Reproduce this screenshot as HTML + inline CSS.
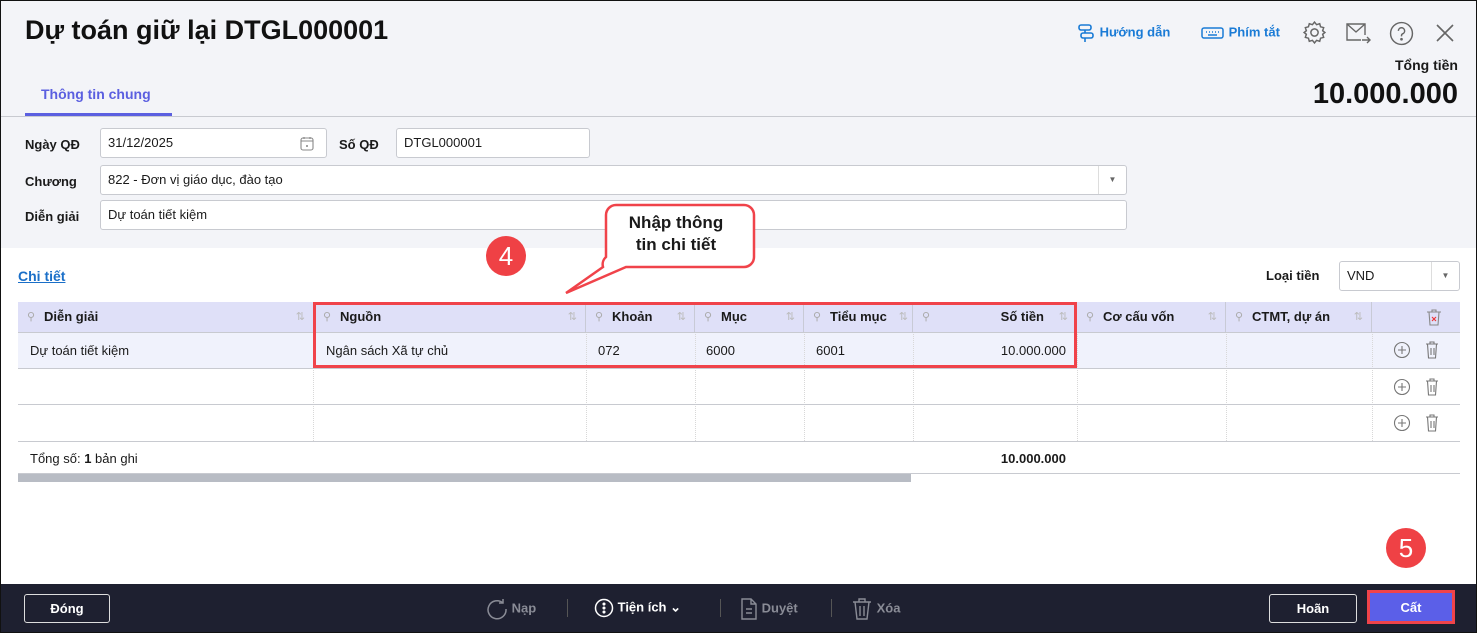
<!DOCTYPE html>
<html><head><meta charset="utf-8"><style>
*{box-sizing:border-box;margin:0;padding:0}
body{width:1477px;height:633px;overflow:hidden;font-family:"Liberation Sans",sans-serif;color:#1a1a1a;position:relative;background:#fff}
.frame{position:absolute;inset:0;border:1px solid #111;pointer-events:none;z-index:50}
.top{position:absolute;left:0;top:0;width:1477px;height:248px;background:#f3f4f8}
.abs{position:absolute}
.lbl{position:absolute;font-size:13px;font-weight:bold}
.inp{position:absolute;background:#fff;border:1px solid #c8cad0;border-radius:3px;font-size:13px;padding-left:7px;line-height:28px}
.th{position:absolute;top:302px;height:30px;font-size:13px;font-weight:bold;line-height:30px;border-right:1px solid #c8cad6}
.pin{color:#aaa;font-weight:normal;font-size:11px;position:absolute;left:9px}
.sort{color:#bbb;font-weight:normal;font-size:11px;position:absolute;right:8px}
.cell{position:absolute;font-size:13px}
.vl{position:absolute;top:332px;height:109px;border-left:1px dotted #d8d8d8}
.hl{position:absolute;left:18px;width:1442px;border-top:1px solid #c8cad0}
.foot{position:absolute;left:0;top:584px;width:1477px;height:49px;background:#1e2030}
.btn{position:absolute;border:1px solid #ddd;border-radius:3px;color:#fff;font-size:13px;font-weight:bold;text-align:center;line-height:27px}
.fi{position:absolute;top:598px;font-size:13px;font-weight:bold;color:#8a8c96}
</style></head><body>
<div class="top"></div>
<div class="abs" style="left:25px;top:15px;font-size:27px;font-weight:bold;color:#111">Dự toán giữ lại DTGL000001</div>
<div class="abs" style="left:1076px;top:23px;color:#1a7bd6;font-size:13px;font-weight:bold">
<svg width="20" height="20" viewBox="0 0 20 20" style="vertical-align:middle" fill="none" stroke="#1a7bd6" stroke-width="1.6"><rect x="3" y="2" width="12" height="5" rx="2"/><rect x="5" y="10" width="12" height="5" rx="2"/><path d="M9 7v3M9 15v4"/></svg> Hướng dẫn</div>
<div class="abs" style="left:1201px;top:23px;color:#1a7bd6;font-size:13px;font-weight:bold">
<svg width="24" height="20" viewBox="0 0 24 20" style="vertical-align:middle" fill="none" stroke="#1a7bd6" stroke-width="1.5"><rect x="1" y="5" width="21" height="10" rx="2"/><path d="M5 9h1M8 9h1M11 9h1M14 9h1M17 9h1M7 12h9"/></svg> Phím tắt</div>
<svg class="abs" style="left:1302px;top:20px" width="25" height="25" viewBox="0 0 24 24" fill="none" stroke="#666" stroke-width="1.4"><circle cx="12" cy="12" r="3.5"/><path d="M12 2l2 2.5 3-1 .8 3 3 .8-1 3L22 12l-2.2 1.7 1 3-3 .8-.8 3-3-1L12 22l-2-2.5-3 1-.8-3-3-.8 1-3L2 12l2.2-1.7-1-3 3-.8.8-3 3 1z"/></svg>
<svg class="abs" style="left:1345px;top:21px" width="27" height="24" viewBox="0 0 27 24" fill="none" stroke="#666" stroke-width="1.4"><path d="M20 14V3H2v16h14"/><path d="M2 3l9 8 9-8"/><path d="M17 19h8M22 16l3 3-3 3"/></svg>
<svg class="abs" style="left:1389px;top:21px" width="25" height="25" viewBox="0 0 24 24" fill="none" stroke="#666" stroke-width="1.4"><circle cx="12" cy="12" r="10.5"/><path d="M9 9.5a3 3 0 1 1 4 2.8c-.8.4-1 1-1 2v.5"/><circle cx="12" cy="17.5" r=".6" fill="#666"/></svg>
<svg class="abs" style="left:1435px;top:23px" width="20" height="20" viewBox="0 0 20 20" stroke="#666" stroke-width="1.6"><path d="M2 2l16 16M18 2L2 18"/></svg>
<div class="abs" style="right:19px;top:57px;font-size:14px;font-weight:bold">Tổng tiền</div>
<div class="abs" style="right:19px;top:78px;font-size:29px;font-weight:bold;color:#111">10.000.000</div>
<div class="abs" style="left:41px;top:86px;font-size:14px;font-weight:bold;color:#5b5fe0">Thông tin chung</div>
<div class="abs" style="left:25px;top:113px;width:147px;height:3px;background:#5b5fe0"></div>
<div class="abs" style="left:0;top:116px;width:1477px;border-top:1px solid #c8cad0"></div>

<div class="lbl" style="left:25px;top:137px">Ngày QĐ</div>
<div class="inp" style="left:100px;top:128px;width:227px;height:30px">31/12/2025
<svg style="position:absolute;right:12px;top:7px" width="14" height="15" viewBox="0 0 14 15" fill="none" stroke="#888" stroke-width="1.1"><rect x="1" y="2" width="12" height="12" rx="2"/><path d="M4 1v2M10 1v2M1 5h12"/><circle cx="7" cy="10" r=".5"/></svg></div>
<div class="lbl" style="left:339px;top:137px">Số QĐ</div>
<div class="inp" style="left:396px;top:128px;width:194px;height:30px">DTGL000001</div>
<div class="lbl" style="left:25px;top:174px">Chương</div>
<div class="inp" style="left:100px;top:165px;width:1027px;height:30px">822 - Đơn vị giáo dục, đào tạo
<div style="position:absolute;right:0;top:0;width:28px;height:28px;border-left:1px solid #ddd;font-size:8px;color:#666;text-align:center">▼</div></div>
<div class="lbl" style="left:25px;top:209px">Diễn giải</div>
<div class="inp" style="left:100px;top:200px;width:1027px;height:30px">Dự toán tiết kiệm</div>

<div class="abs" style="left:18px;top:268px;font-size:14px;font-weight:bold;color:#1a6fc8;text-decoration:underline">Chi tiết</div>
<div class="lbl" style="left:1266px;top:268px">Loại tiền</div>
<div class="inp" style="left:1339px;top:261px;width:121px;height:30px">VND
<div style="position:absolute;right:0;top:0;width:28px;height:28px;border-left:1px solid #ddd;font-size:8px;color:#666;text-align:center">▼</div></div>

<div class="abs" style="left:18px;top:302px;width:1442px;height:30px;background:#dfe0f8"></div>
<div class="abs" style="left:18px;top:332px;width:1442px;height:36px;background:#f0f2fc"></div>
<div class="th" style="left:18px;width:296px"><span class="pin">⚲</span><span style="margin-left:26px">Diễn giải</span><span class="sort">⇅</span></div>
<div class="th" style="left:314px;width:272px"><span class="pin">⚲</span><span style="margin-left:26px">Nguồn</span><span class="sort">⇅</span></div>
<div class="th" style="left:586px;width:109px"><span class="pin">⚲</span><span style="margin-left:26px">Khoản</span><span class="sort">⇅</span></div>
<div class="th" style="left:695px;width:109px"><span class="pin">⚲</span><span style="margin-left:26px">Mục</span><span class="sort">⇅</span></div>
<div class="th" style="left:804px;width:109px"><span class="pin">⚲</span><span style="margin-left:26px">Tiểu mục</span><span class="sort" style="right:4px">⇅</span></div>
<div class="th" style="left:913px;width:164px"><span class="pin">⚲</span><span style="position:absolute;right:32px">Số tiền</span><span class="sort">⇅</span></div>
<div class="th" style="left:1077px;width:149px"><span class="pin">⚲</span><span style="margin-left:26px">Cơ cấu vốn</span><span class="sort">⇅</span></div>
<div class="th" style="left:1226px;width:146px"><span class="pin">⚲</span><span style="margin-left:26px">CTMT, dự án</span><span class="sort">⇅</span></div>
<svg class="abs" style="left:1426px;top:308px" width="16" height="18" viewBox="0 0 16 18" fill="none" stroke="#888" stroke-width="1.1"><path d="M1 4h14M6 4V2h4v2M3 4l1 13h8l1-13"/><path d="M6 9l4 4M10 9l-4 4" stroke="#e33"/></svg>
<div class="vl" style="left:313px"></div><div class="vl" style="left:586px"></div><div class="vl" style="left:695px"></div><div class="vl" style="left:804px"></div><div class="vl" style="left:913px"></div><div class="vl" style="left:1077px"></div><div class="vl" style="left:1226px"></div><div class="vl" style="left:1372px"></div>
<div class="hl" style="top:332px"></div><div class="hl" style="top:368px"></div><div class="hl" style="top:404px"></div><div class="hl" style="top:441px"></div><div class="hl" style="top:473px"></div>
<div class="cell" style="left:30px;top:343px">Dự toán tiết kiệm</div>
<div class="cell" style="left:326px;top:343px">Ngân sách Xã tự chủ</div>
<div class="cell" style="left:598px;top:343px">072</div>
<div class="cell" style="left:706px;top:343px">6000</div>
<div class="cell" style="left:816px;top:343px">6001</div>
<div class="cell" style="left:913px;width:153px;text-align:right;top:343px">10.000.000</div>
<div class="cell" style="left:30px;top:451px">Tổng số: <b>1</b> bản ghi</div>
<div class="cell" style="left:913px;width:153px;text-align:right;top:451px;font-weight:bold">10.000.000</div>
<div class="abs" style="left:18px;top:474px;width:893px;height:8px;background:#b8bcc4"></div>
<svg class="abs" style="left:1393px;top:341px" width="46" height="100" viewBox="0 0 46 100" fill="none" stroke="#777" stroke-width="1.1">
<g><circle cx="9" cy="9" r="7.5"/><path d="M9 5v8M5 9h8"/><path d="M33 3h12M37 3V1h4v2M34.5 3l1 14h7l1-14M38 7v7M41 7v7"/></g>
<g transform="translate(0,37)"><circle cx="9" cy="9" r="7.5"/><path d="M9 5v8M5 9h8"/><path d="M33 3h12M37 3V1h4v2M34.5 3l1 14h7l1-14M38 7v7M41 7v7"/></g>
<g transform="translate(0,73)"><circle cx="9" cy="9" r="7.5"/><path d="M9 5v8M5 9h8"/><path d="M33 3h12M37 3V1h4v2M34.5 3l1 14h7l1-14M38 7v7M41 7v7"/></g></svg>

<div class="abs" style="left:313px;top:302px;width:764px;height:66px;border:3px solid #f0434a"></div>
<svg class="abs" style="left:560px;top:200px" width="200" height="100" viewBox="0 0 200 100"><path d="M56 5h128a10 10 0 0 1 10 10v42a10 10 0 0 1-10 10H66L6 93 43 67h0a10 10 0 0 1 3-10V15a10 10 0 0 1 10-10z" fill="#fff" stroke="#f0434a" stroke-width="2.5"/></svg>
<div class="abs" style="left:606px;top:212px;width:140px;text-align:center;font-size:17px;font-weight:bold;line-height:22px">Nhập thông<br>tin chi tiết</div>
<div class="abs" style="left:486px;top:236px;width:40px;height:40px;border-radius:50%;background:#ef4145;color:#fff;font-size:26px;text-align:center;line-height:40px">4</div>
<div class="abs" style="left:1386px;top:528px;width:40px;height:40px;border-radius:50%;background:#ef4145;color:#fff;font-size:26px;text-align:center;line-height:40px">5</div>

<div class="foot"></div>
<div class="btn" style="left:24px;top:594px;width:86px;height:29px">Đóng</div>
<div class="fi" style="left:486px;top:598px"><svg width="22" height="22" viewBox="0 0 22 22" fill="none" stroke="#8a8c96" stroke-width="1.5" style="vertical-align:middle"><path d="M17 5A9 9 0 1 0 20 11"/><path d="M17 1v4h-4"/></svg> Nạp</div>
<div class="abs" style="left:567px;top:599px;height:18px;border-left:1px solid #555"></div>
<div class="fi" style="left:594px;top:598px;color:#fff"><svg width="20" height="20" viewBox="0 0 20 20" fill="none" stroke="#fff" stroke-width="1.5" style="vertical-align:middle"><circle cx="10" cy="10" r="8.5"/><circle cx="10" cy="6" r=".8" fill="#fff"/><circle cx="10" cy="10" r=".8" fill="#fff"/><circle cx="10" cy="14" r=".8" fill="#fff"/></svg> Tiện ích ⌄</div>
<div class="abs" style="left:720px;top:599px;height:18px;border-left:1px solid #555"></div>
<div class="fi" style="left:740px;top:598px"><svg width="18" height="22" viewBox="0 0 18 22" fill="none" stroke="#8a8c96" stroke-width="1.4" style="vertical-align:middle"><path d="M2 1h9l5 5v15H2z M11 1v5h5M6 11h6M6 15h6"/></svg> Duyệt</div>
<div class="abs" style="left:831px;top:599px;height:18px;border-left:1px solid #555"></div>
<div class="fi" style="left:851px;top:598px"><svg width="22" height="22" viewBox="0 0 22 22" fill="none" stroke="#8a8c96" stroke-width="1.4" style="vertical-align:middle"><path d="M2 4h18M8 4V1h6v3M4 4l2 17h10l2-17M9 8v10M13 8v10"/></svg> Xóa</div>
<div class="btn" style="left:1269px;top:594px;width:88px;height:29px">Hoãn</div>
<div class="abs" style="left:1367px;top:590px;width:88px;height:34px;background:#5b5fe8;border:3px solid #f0434a;color:#fff;font-size:13px;font-weight:bold;text-align:center;line-height:30px">Cất</div>
<div class="frame"></div>
</body></html>
